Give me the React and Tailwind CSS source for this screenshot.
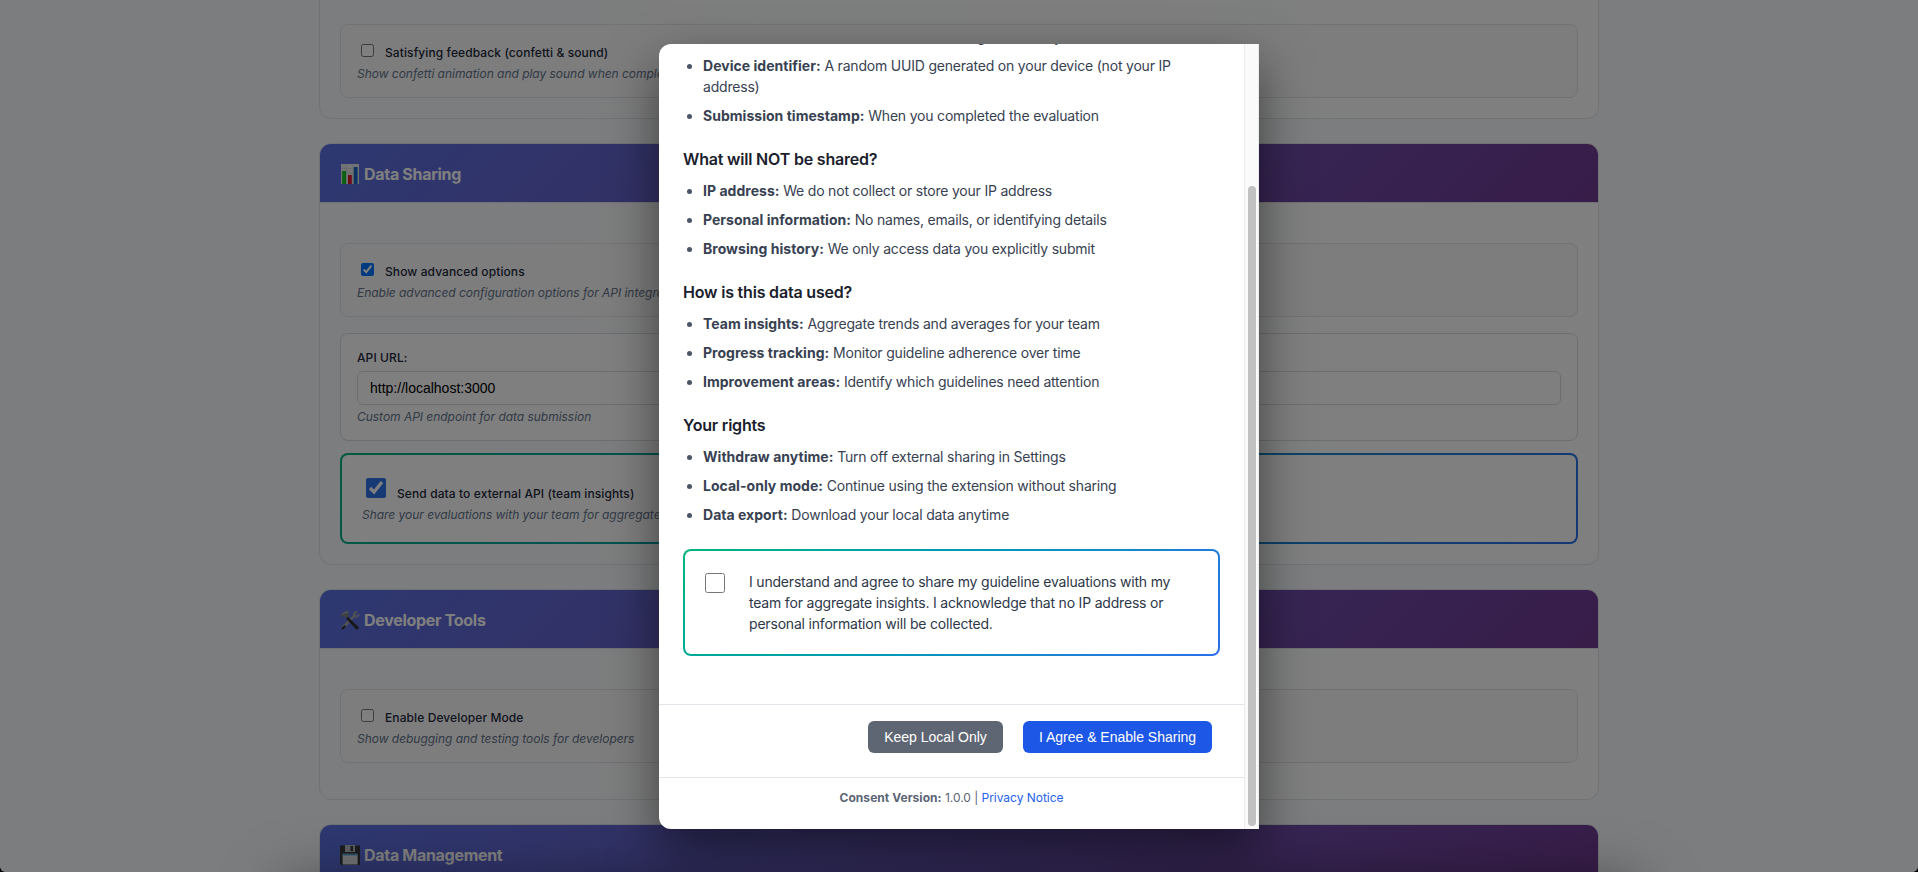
import React from 'react';

function ChartIcon() {
  return (
    <svg width="18" height="20" viewBox="0 0 18 20" className="mt-[2px] shrink-0">
      <rect x="0" y="0" width="18" height="20" fill="#e4e9ec" />
      <path d="M0 4.5h18M0 9h18M0 13.5h18M5.5 0v20M12 0v20" stroke="#c3ccd2" strokeWidth=".6" />
      <rect x="1.2" y="7" width="3.8" height="13" fill="#10c020" />
      <rect x="7" y="11" width="3.8" height="9" fill="#d8182c" />
      <rect x="12.8" y="3" width="3.8" height="17" fill="#1467c8" />
    </svg>
  );
}

function ToolsIcon() {
  return (
    <svg width="20" height="20" viewBox="0 0 20 20" className="mt-[2px] -mr-px -ml-px shrink-0">
      <path d="M17.800 1.200l-2.300 2.600.5 1.200 1.300.3 2-2.400c.6 2.200-.5 4.200-2.700 4.500-.7.1-1.300 0-1.800-.2L4.600 18.200c-.7.8-1.900.9-2.600.2-.7-.7-.6-1.800.2-2.500L12.900 5.600c-.6-2.400 1.600-5.200 4.900-4.400z" fill="#9aa2a8" />
      <path d="M7.400 6.600l10.800 10.200c.7.7.5 1.700-.1 2.300-.6.600-1.600.6-2.200-.1L5.900 8.200z" fill="#2c2f33" />
      <path d="M4.400 15.200l-2.500 2.200c-.5.6-.5 1.300 0 1.700.6.500 1.300.4 1.800-.1l2.300-2.500z" fill="#2c2f33" />
      <path d="M.6 5.700C2 2.600 5 .6 9.600 1.300L8.400 3.200l.5 2.600-2.700 2.800-2.200-2.300-1.700 1.200z" fill="#7b8389" />
      <path d="M2.800 4.300C4.300 2.500 6 1.900 8.200 1.900" stroke="#c9ced1" strokeWidth=".9" fill="none" />
    </svg>
  );
}

function FloppyIcon() {
  return (
    <svg width="20" height="20" viewBox="0 0 20 20" className="mt-[2px] -mr-px -ml-px shrink-0">
      <path d="M0 .5h20V20H1.500L0 18.500z" fill="#35383c" />
      <rect x="5" y="0" width="10" height="7" fill="#b9bdc0" />
      <rect x="10.500" y="1" width="2.600" height="5" fill="#35383c" />
      <rect x="2.600" y="8.800" width="15" height="10.700" fill="#e6e8ea" />
      <rect x="2.600" y="8.800" width="15" height="1.600" fill="#4aa5d8" />
      <path d="M4 13h12M4 15.500h12" stroke="#cfd3d6" strokeWidth=".6" />
    </svg>
  );
}

function Card({ icon, title, className = '', children }) {
  return (
    <section className={`overflow-hidden rounded-xl border border-[#e2e5ea] bg-linear-to-r from-[#f8fafc] to-white ${className}`}>
      {title && (
        <header className="flex h-[59px] items-center gap-[5px] border-b border-[#e2e5ea] bg-linear-135 from-[#5b71e2] to-[#703a92] px-[21px]">
          {icon}
          <h2 className="mt-px text-base leading-6 font-bold tracking-[-0.3px] text-white">{title}</h2>
        </header>
      )}
      {children}
    </section>
  );
}

function Hint({ children }) {
  return <p className="text-xs leading-[18px] tracking-[-0.03px] text-[#64748b] italic">{children}</p>;
}

function Option({ label, hint, checked = false }) {
  return (
    <div className="h-[74px] rounded-lg border border-[#e2e5ea] bg-[#fafafa] px-4 pt-[19px]">
      <label className="flex items-start gap-[11px] pl-1">
        <input type="checkbox" readOnly checked={checked} className="h-[13px] w-[13px] shrink-0" />
        <span className="-mt-[2px] mb-[2px] text-xs leading-[21px] font-medium tracking-[0.1px] text-[#1e293b]">{label}</span>
      </label>
      <Hint>{hint}</Hint>
    </div>
  );
}

function Section({ title, items }) {
  return (
    <>
      {title && <h3 className="mt-[21px] mb-[9px] text-base leading-6 font-semibold tracking-[-0.19px] text-[#1a202c]">{title}</h3>}
      <ul className="list-disc pl-5 text-sm leading-[21px] tracking-[-0.2px] text-[#374151] marker:text-[#4a5568]">
        {items.map(([name, text]) => (
          <li key={name} className="mb-2">
            <strong className="font-bold tracking-[0.03px] text-[#374151]">{name}</strong> {text}
          </li>
        ))}
      </ul>
    </>
  );
}

const shared = [
  ['Evaluation results:', 'Your answers to each guideline in your team'],
  ['Device identifier:', 'A random UUID generated on your device (not your IP address)'],
  ['Submission timestamp:', 'When you completed the evaluation'],
];
const notShared = [
  ['IP address:', 'We do not collect or store your IP address'],
  ['Personal information:', 'No names, emails, or identifying details'],
  ['Browsing history:', 'We only access data you explicitly submit'],
];
const usage = [
  ['Team insights:', 'Aggregate trends and averages for your team'],
  ['Progress tracking:', 'Monitor guideline adherence over time'],
  ['Improvement areas:', 'Identify which guidelines need attention'],
];
const rights = [
  ['Withdraw anytime:', 'Turn off external sharing in Settings'],
  ['Local-only mode:', 'Continue using the extension without sharing'],
  ['Data export:', 'Download your local data anytime'],
];

function Settings() {
  return (
    <main className="mx-auto flex w-[1280px] flex-col gap-6">
      <Card className="-mt-10 h-[159px] px-5 pt-[63px]">
        <Option label="Satisfying feedback (confetti & sound)" hint="Show confetti animation and play sound when completing evaluations" />
      </Card>

      <Card icon={<ChartIcon />} title="Data Sharing">
        <div className="px-5 pt-10 pb-5">
          <Option checked label="Show advanced options" hint="Enable advanced configuration options for API integration" />
          <div className="mt-4 h-[108px] rounded-lg border border-[#d9dde3] bg-white px-4 pt-[13px]">
            <p className="text-xs leading-[21px] font-medium tracking-[0.1px] text-[#1e293b]">API URL:</p>
            <input
              readOnly
              value="http://localhost:3000"
              className="mt-[3px] block h-[34px] w-full rounded-md border border-[#d9dde3] bg-white px-3 font-['Liberation_Sans',sans-serif] text-sm text-black"
            />
            <div className="mt-[3px]">
              <Hint>Custom API endpoint for data submission</Hint>
            </div>
          </div>
          <div className="mt-3 h-[91px] rounded-lg bg-linear-135 from-[#05b480] to-[#2b6eea] p-[2px]">
            <div className="h-full rounded-md bg-white px-5 pt-[23px]">
              <label className="flex items-start gap-[11px] pl-1">
                <input type="checkbox" readOnly checked className="h-5 w-5 shrink-0 accent-[#2f74ea]" />
                <span className="mt-[5px] text-xs leading-[21px] font-medium tracking-[0.1px] text-[#1e293b]">
                  Send data to external API (team insights)
                </span>
              </label>
              <div className="mt-[2px]">
                <Hint>Share your evaluations with your team for aggregate insights</Hint>
              </div>
            </div>
          </div>
        </div>
      </Card>

      <Card icon={<ToolsIcon />} title="Developer Tools">
        <div className="px-5 pt-10 pb-9">
          <Option label="Enable Developer Mode" hint="Show debugging and testing tools for developers" />
        </div>
      </Card>

      <Card icon={<FloppyIcon />} title="Data Management">
        <div className="h-40" />
      </Card>
    </main>
  );
}

function ConsentModal() {
  return (
    <div className="flex h-[785px] w-[600px] overflow-hidden rounded-l-xl bg-white shadow-[0_20px_50px_rgba(0,0,0,0.5)]">
      <div className="flex min-w-0 flex-1 flex-col overflow-hidden">
        <div className="-mt-[18px] px-6">
          <Section items={shared} />
          <Section title="What will NOT be shared?" items={notShared} />
          <Section title="How is this data used?" items={usage} />
          <Section title="Your rights" items={rights} />
          <div className="mt-6 rounded-lg bg-linear-135 from-[#05b480] to-[#2b6eea] p-[2px]">
            <label className="flex items-start gap-6 rounded-md bg-white p-5">
              <input type="checkbox" readOnly checked={false} className="mt-[2px] h-5 w-5 shrink-0" />
              <span className="text-sm leading-[21px] tracking-[-0.19px] text-[#2d3748]">
                I understand and agree to share my guideline evaluations with my team for aggregate insights. I acknowledge that no IP address or
                personal information will be collected.
              </span>
            </label>
          </div>
        </div>
        <div className="mt-12 flex h-[73px] shrink-0 items-start justify-end gap-5 border-t border-[#e2e5ea] px-8 pt-4 font-['Liberation_Sans',sans-serif] text-sm text-white">
          <button className="h-8 w-[135px] rounded-md bg-[#5f6673]">Keep Local Only</button>
          <button className="h-8 w-[189px] rounded-md bg-[#1d57e5]">I Agree &amp; Enable Sharing</button>
        </div>
        <footer className="flex-1 border-t border-[#e2e5ea] pt-[11px] text-center text-xs leading-[18px] tracking-[-0.03px] text-[#5b6475]">
          <strong className="font-bold tracking-[0.05px]">Consent Version:</strong> 1.0.0 | <a className="text-[#2563eb]">Privacy Notice</a>
        </footer>
      </div>
      <div className="flex w-[15px] flex-col border-x border-[#ebebeb] bg-[#fafafa] pt-[142px] pr-[2px] pb-[3px] pl-[3px]">
        <div className="flex-1 rounded-full bg-[#c1c1c1]" />
      </div>
    </div>
  );
}

export default function App() {
  return (
    <div className="h-[872px] bg-black font-[Inter,sans-serif]">
      <div className="relative h-full overflow-hidden rounded-b-md bg-[#f8fafc]">
        <Settings />
        <div className="absolute top-[886px] left-[285px] h-20 w-[1350px] shadow-[0_0_60px_rgba(0,0,0,0.5)]" />
        <div className="absolute inset-0 flex items-center justify-center bg-black/50">
          <ConsentModal />
        </div>
      </div>
    </div>
  );
}
